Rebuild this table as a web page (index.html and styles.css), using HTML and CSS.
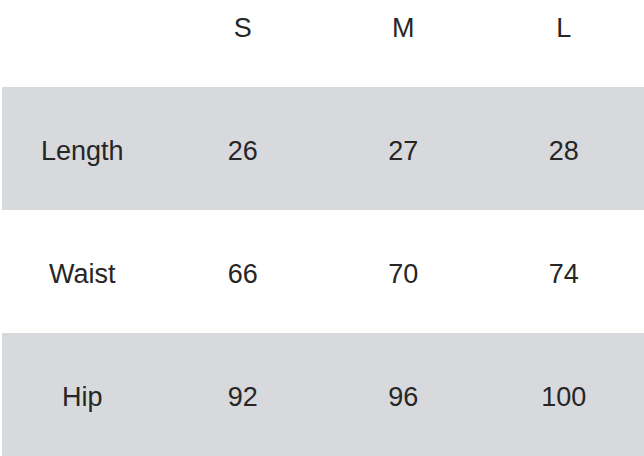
FILE: index.html
```html
<!DOCTYPE html>
<html lang="en">
<head>
<meta charset="utf-8">
<title>Size chart</title>
<link rel="stylesheet" href="styles.css">
</head>
<body>
<div class="chart">
  <div class="row head">
    <div class="cell"></div>
    <div class="cell">S</div>
    <div class="cell">M</div>
    <div class="cell">L</div>
  </div>
  <div class="row band">
    <div class="cell">Length</div>
    <div class="cell">26</div>
    <div class="cell">27</div>
    <div class="cell">28</div>
  </div>
  <div class="row">
    <div class="cell">Waist</div>
    <div class="cell">66</div>
    <div class="cell">70</div>
    <div class="cell">74</div>
  </div>
  <div class="row band">
    <div class="cell">Hip</div>
    <div class="cell">92</div>
    <div class="cell">96</div>
    <div class="cell">100</div>
  </div>
</div>
</body>
</html>
```
FILE: styles.css
```css
html, body {
  margin: 0;
  padding: 0;
  background: #ffffff;
}
body {
  width: 644px;
  height: 456px;
  overflow: hidden;
  font-family: "Liberation Sans", Arial, sans-serif;
  font-size: 27px;
  color: #262626;
}
.chart {
  display: flex;
  flex-direction: column;
  padding-left: 2px;
}
.row {
  display: grid;
  grid-template-columns: repeat(4, 1fr);
  height: 123px;
  align-items: center;
  padding-top: 5px;
  box-sizing: border-box;
}
.row.head {
  height: 87px;
  align-items: start;
  padding-top: 0;
}
.row.head .cell {
  line-height: 56px;
}
.band {
  background: #d8d9dd;
}
.cell {
  text-align: center;
  line-height: 30px;
}
```
